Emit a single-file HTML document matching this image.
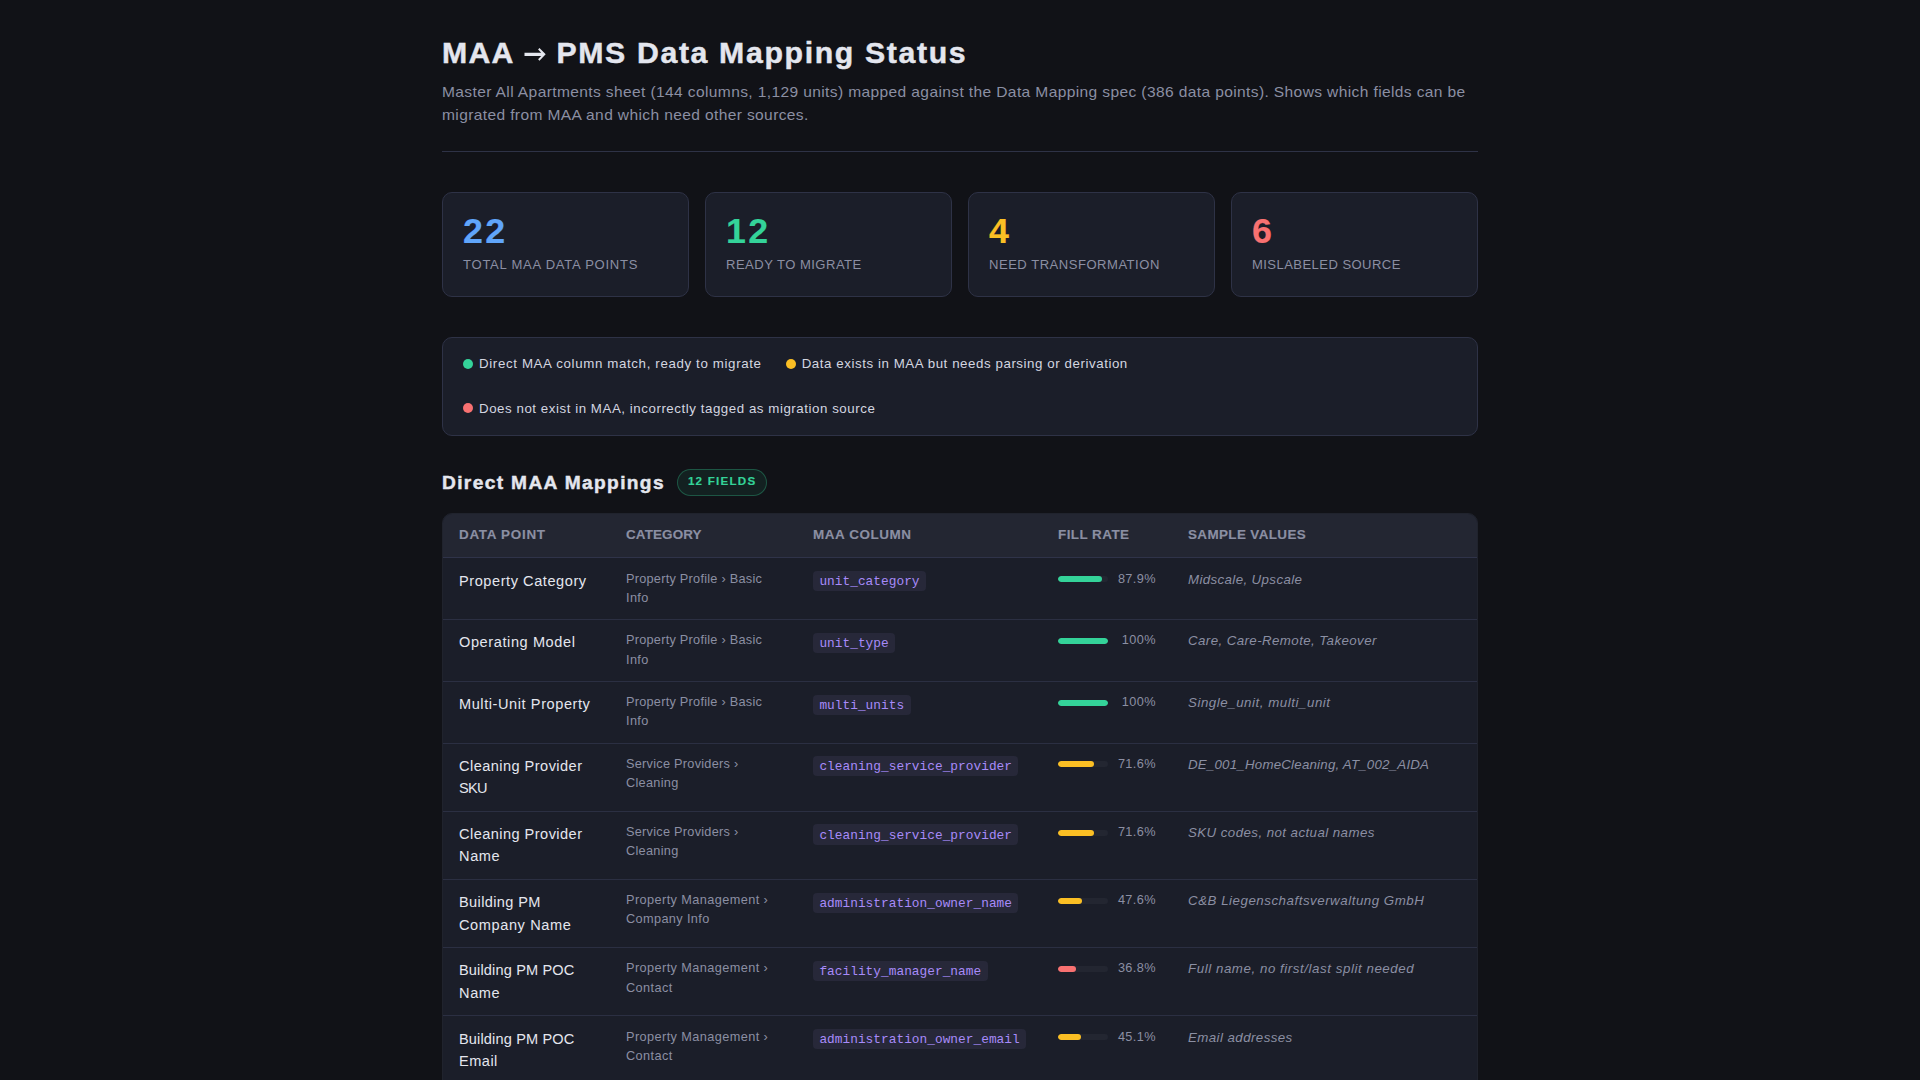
<!DOCTYPE html>
<html><head><meta charset="utf-8"><title>MAA → PMS Data Mapping Status</title>
<style>
*{box-sizing:border-box;margin:0;padding:0}
html,body{background:#111217}
.page{height:1080px;overflow:hidden}
body{font-family:"Liberation Sans",sans-serif;color:#e4e6ee;font-size:14px;line-height:22.4px}
.t{white-space:nowrap}
.blk{display:block}
.wrap{width:1100px;margin:0 auto;padding:36px 32px 0}
h1{font-size:30.240px;font-weight:700;line-height:36.4px;color:#e4e6ee;margin-bottom:9px;white-space:nowrap}
.sub{font-size:15.552px;color:#8b8fa3;line-height:23.03px;padding-bottom:24px;border-bottom:1px solid #2e3246;margin-bottom:40px}
.cards{display:grid;grid-template-columns:repeat(4,1fr);gap:16px;margin-bottom:40px}
.card{background:#1b1e29;border:1px solid #2e3246;border-radius:10px;padding:20px;height:104.88px}
.num{font-size:35.840px;font-weight:700;line-height:38.4px}
.lbl{letter-spacing:0;font-size:13.056px;color:#8b8fa3;margin-top:3px;line-height:20.48px}
.legend{background:#1b1e29;border:1px solid #2e3246;border-radius:10px;padding:16px 20px;display:flex;flex-wrap:wrap;gap:24px;margin-bottom:32px;height:98.96px}
.li{display:flex;align-items:center;gap:6px;font-size:13.312px;color:#d4d6e0;line-height:20.48px;height:20.48px}
.dot{width:10px;height:10px;border-radius:50%;flex:none;position:relative;top:-1px}
.sec{display:flex;align-items:center;gap:12px;margin-bottom:15.5px;height:29.44px}
.sec h2{font-size:19.136px;font-weight:700;line-height:29.44px}
.badge{letter-spacing:0;font-size:11.648px;font-weight:700;color:#34d399;background:rgba(52,211,153,.08);border:1px solid rgba(52,211,153,.3);border-radius:14px;padding:3px 10px 4px;line-height:18px;height:27px;position:relative;top:-1px}
table{width:100%;border-collapse:separate;border-spacing:0;table-layout:fixed}
.tbl{border:1px solid #20232d;border-radius:10px;overflow:hidden;background:#1b1e29}
th{letter-spacing:0;background:#232632;text-align:left;font-size:13.440px;font-weight:700;color:#8b8fa3;padding:12px 16px;border-bottom:1px solid #2f3349;line-height:19.2px;height:44.2px}
td{padding:11.2px 16px;vertical-align:top;border-bottom:1px solid #2b2f42;line-height:22.39px}
td.dp{font-size:14.560px;color:#e4e6ee}
td.cat{font-size:12.720px;color:#8b8fa3;line-height:19.18px}
td.mc{font-size:14px}
code{font-family:"Liberation Mono",monospace;font-size:12.800px;color:#a78bfa;background:#272839;padding:3.6px 6.4px 1.6px;border-radius:4px}
.fill{display:flex;align-items:center;gap:8px;font-size:12.720px;color:#8b8fa3;line-height:19.2px}
.bar{width:50px;height:6px;border-radius:3px;background:#232631;overflow:hidden;flex:none}
.bar i{display:block;height:100%;border-radius:3px}
.pct{min-width:40px;text-align:right}
td.smp{font-size:13.312px;font-style:italic;color:#8b8fa3;line-height:20.48px}
.c-h1{position:relative;top:-1.50px}
.c-sub{position:relative;top:-1.50px}
.c-num{position:relative;top:-1.50px}
.c-h2{position:relative;top:-0.50px}
.c-badge{position:relative;top:-1.00px}
.c-th{position:relative;top:-1.50px}
.c-cat{position:relative;top:-1.00px}
.c-pct{position:relative;top:-1.00px}
.c-code{position:relative;top:-0.50px}
.c-h1{-webkit-text-stroke:0.45px currentColor}
.c-num{-webkit-text-stroke:0.15px currentColor}
.c-h2{-webkit-text-stroke:0.45px currentColor}
.c-badge{-webkit-text-stroke:0.15px currentColor}
.c-th{-webkit-text-stroke:0.15px currentColor}
</style></head><body><div class="page"><div class="wrap">
<h1><span class="t c-h1" id="t1" style="letter-spacing:1.203px">MAA </span><span style="display:inline-block;width:23.47px;height:36.4px;vertical-align:top"><svg width="23.47" height="36.4" viewBox="0 0 23.47 36.4" style="display:block"><polygon fill="#e4e6ee" points="1.49,16.64 18.2,16.64 15.1,13.55 16.45,12.05 22.7,18.37 16.45,24.7 15.1,23.2 18.2,20.11 1.49,20.11"/></svg></span><span class="t c-h1" id="t2" style="letter-spacing:1.645px"> PMS Data Mapping Status</span></h1>
<p class="sub"><span class="t blk c-sub" id="t3" style="letter-spacing:0.378px">Master All Apartments sheet (144 columns, 1,129 units) mapped against the Data Mapping spec (386 data points). Shows which fields can be</span><span class="t blk c-sub" id="t4" style="letter-spacing:0.374px">migrated from MAA and which need other sources.</span></p>
<div class="cards">
<div class="card"><div class="num" style="color:#60a5fa"><span class="t c-num" id="t5" style="letter-spacing:2.336px">22</span></div><div class="lbl"><span class="t c-lbl" id="t6" style="letter-spacing:0.747px">TOTAL MAA DATA POINTS</span></div></div>
<div class="card"><div class="num" style="color:#34d399"><span class="t c-num" id="t7" style="letter-spacing:2.336px">12</span></div><div class="lbl"><span class="t c-lbl" id="t8" style="letter-spacing:0.478px">READY TO MIGRATE</span></div></div>
<div class="card"><div class="num" style="color:#fbbf24"><span class="t c-num" id="t9" style="letter-spacing:2.328px">4</span></div><div class="lbl"><span class="t c-lbl" id="t10" style="letter-spacing:0.508px">NEED TRANSFORMATION</span></div></div>
<div class="card"><div class="num" style="color:#f87171"><span class="t c-num" id="t11" style="letter-spacing:2.328px">6</span></div><div class="lbl"><span class="t c-lbl" id="t12" style="letter-spacing:0.438px">MISLABELED SOURCE</span></div></div>
</div><div class="legend">
<div class="li"><span class="dot" style="background:#34d399"></span><span class="t c-li" id="t13" style="letter-spacing:0.639px">Direct MAA column match, ready to migrate</span></div>
<div class="li"><span class="dot" style="background:#fbbf24"></span><span class="t c-li" id="t14" style="letter-spacing:0.567px">Data exists in MAA but needs parsing or derivation</span></div>
<div class="li"><span class="dot" style="background:#f87171"></span><span class="t c-li" id="t15" style="letter-spacing:0.549px">Does not exist in MAA, incorrectly tagged as migration source</span></div>
</div>
<div class="sec"><h2><span class="t c-h2" id="t16" style="letter-spacing:1.368px">Direct MAA Mappings</span></h2><span class="badge"><span class="t c-badge" id="t17" style="letter-spacing:1.215px">12 FIELDS</span></span></div>
<div class="tbl"><table><colgroup><col style="width:167px"><col style="width:187px"><col style="width:245px"><col style="width:130px"><col></colgroup>
<tr><th><span class="t c-th" id="t18" style="letter-spacing:0.711px">DATA POINT</span></th><th><span class="t c-th" id="t19" style="letter-spacing:0.127px">CATEGORY</span></th><th><span class="t c-th" id="t20" style="letter-spacing:0.584px">MAA COLUMN</span></th><th><span class="t c-th" id="t21" style="letter-spacing:0.453px">FILL RATE</span></th><th><span class="t c-th" id="t22" style="letter-spacing:0.371px">SAMPLE VALUES</span></th></tr>
<tr><td class="dp"><span class="t blk c-dp" id="t23" style="letter-spacing:0.564px">Property Category</span></td><td class="cat"><span class="t blk c-cat" id="t24" style="letter-spacing:0.252px">Property Profile › Basic</span><span class="t blk c-cat" id="t25" style="letter-spacing:0.375px">Info</span></td><td class="mc"><code><span class="t c-code" id="t26" style="letter-spacing:0.025px">unit_category</span></code></td><td><div class="fill"><div class="bar"><i style="width:87.9%;background:#34d399"></i></div><span class="pct"><span class="t c-pct" id="t27" style="letter-spacing:0.409px">87.9%</span></span></div></td><td class="smp"><span class="t c-smp" id="t28" style="letter-spacing:0.376px">Midscale, Upscale</span></td></tr>
<tr><td class="dp"><span class="t blk c-dp" id="t29" style="letter-spacing:0.596px">Operating Model</span></td><td class="cat"><span class="t blk c-cat" id="t30" style="letter-spacing:0.252px">Property Profile › Basic</span><span class="t blk c-cat" id="t31" style="letter-spacing:0.375px">Info</span></td><td class="mc"><code><span class="t c-code" id="t32" style="letter-spacing:0.024px">unit_type</span></code></td><td><div class="fill"><div class="bar"><i style="width:100%;background:#34d399"></i></div><span class="pct"><span class="t c-pct" id="t33" style="letter-spacing:0.445px">100%</span></span></div></td><td class="smp"><span class="t c-smp" id="t34" style="letter-spacing:0.414px">Care, Care-Remote, Takeover</span></td></tr>
<tr><td class="dp"><span class="t blk c-dp" id="t35" style="letter-spacing:0.580px">Multi-Unit Property</span></td><td class="cat"><span class="t blk c-cat" id="t36" style="letter-spacing:0.252px">Property Profile › Basic</span><span class="t blk c-cat" id="t37" style="letter-spacing:0.375px">Info</span></td><td class="mc"><code><span class="t c-code" id="t38" style="letter-spacing:0.024px">multi_units</span></code></td><td><div class="fill"><div class="bar"><i style="width:100%;background:#34d399"></i></div><span class="pct"><span class="t c-pct" id="t39" style="letter-spacing:0.445px">100%</span></span></div></td><td class="smp"><span class="t c-smp" id="t40" style="letter-spacing:0.543px">Single_unit, multi_unit</span></td></tr>
<tr><td class="dp"><span class="t blk c-dp" id="t41" style="letter-spacing:0.461px">Cleaning Provider</span><span class="t blk c-dp" id="t42" style="letter-spacing:-0.656px">SKU</span></td><td class="cat"><span class="t blk c-cat" id="t43" style="letter-spacing:0.263px">Service Providers ›</span><span class="t blk c-cat" id="t44" style="letter-spacing:0.301px">Cleaning</span></td><td class="mc"><code><span class="t c-code" id="t45" style="letter-spacing:0.025px">cleaning_service_provider</span></code></td><td><div class="fill"><div class="bar"><i style="width:71.6%;background:#fbbf24"></i></div><span class="pct"><span class="t c-pct" id="t46" style="letter-spacing:0.409px">71.6%</span></span></div></td><td class="smp"><span class="t c-smp" id="t47" style="letter-spacing:0.215px">DE_001_HomeCleaning, AT_002_AIDA</span></td></tr>
<tr><td class="dp"><span class="t blk c-dp" id="t48" style="letter-spacing:0.461px">Cleaning Provider</span><span class="t blk c-dp" id="t49" style="letter-spacing:0.625px">Name</span></td><td class="cat"><span class="t blk c-cat" id="t50" style="letter-spacing:0.263px">Service Providers ›</span><span class="t blk c-cat" id="t51" style="letter-spacing:0.301px">Cleaning</span></td><td class="mc"><code><span class="t c-code" id="t52" style="letter-spacing:0.025px">cleaning_service_provider</span></code></td><td><div class="fill"><div class="bar"><i style="width:71.6%;background:#fbbf24"></i></div><span class="pct"><span class="t c-pct" id="t53" style="letter-spacing:0.409px">71.6%</span></span></div></td><td class="smp"><span class="t c-smp" id="t54" style="letter-spacing:0.432px">SKU codes, not actual names</span></td></tr>
<tr><td class="dp"><span class="t blk c-dp" id="t55" style="letter-spacing:0.376px">Building PM</span><span class="t blk c-dp" id="t56" style="letter-spacing:0.604px">Company Name</span></td><td class="cat"><span class="t blk c-cat" id="t57" style="letter-spacing:0.412px">Property Management ›</span><span class="t blk c-cat" id="t58" style="letter-spacing:0.370px">Company Info</span></td><td class="mc"><code><span class="t c-code" id="t59" style="letter-spacing:0.025px">administration_owner_name</span></code></td><td><div class="fill"><div class="bar"><i style="width:47.6%;background:#fbbf24"></i></div><span class="pct"><span class="t c-pct" id="t60" style="letter-spacing:0.409px">47.6%</span></span></div></td><td class="smp"><span class="t c-smp" id="t61" style="letter-spacing:0.528px">C&amp;B Liegenschaftsverwaltung GmbH</span></td></tr>
<tr><td class="dp"><span class="t blk c-dp" id="t62" style="letter-spacing:0.151px">Building PM POC</span><span class="t blk c-dp" id="t63" style="letter-spacing:0.625px">Name</span></td><td class="cat"><span class="t blk c-cat" id="t64" style="letter-spacing:0.412px">Property Management ›</span><span class="t blk c-cat" id="t65" style="letter-spacing:0.406px">Contact</span></td><td class="mc"><code><span class="t c-code" id="t66" style="letter-spacing:0.025px">facility_manager_name</span></code></td><td><div class="fill"><div class="bar"><i style="width:36.8%;background:#f87171"></i></div><span class="pct"><span class="t c-pct" id="t67" style="letter-spacing:0.409px">36.8%</span></span></div></td><td class="smp"><span class="t c-smp" id="t68" style="letter-spacing:0.560px">Full name, no first/last split needed</span></td></tr>
<tr><td class="dp"><span class="t blk c-dp" id="t69" style="letter-spacing:0.151px">Building PM POC</span><span class="t blk c-dp" id="t70" style="letter-spacing:0.494px">Email</span></td><td class="cat"><span class="t blk c-cat" id="t71" style="letter-spacing:0.412px">Property Management ›</span><span class="t blk c-cat" id="t72" style="letter-spacing:0.406px">Contact</span></td><td class="mc"><code><span class="t c-code" id="t73" style="letter-spacing:0.025px">administration_owner_email</span></code></td><td><div class="fill"><div class="bar"><i style="width:45.1%;background:#fbbf24"></i></div><span class="pct"><span class="t c-pct" id="t74" style="letter-spacing:0.409px">45.1%</span></span></div></td><td class="smp"><span class="t c-smp" id="t75" style="letter-spacing:0.425px">Email addresses</span></td></tr>
<tr><td class="dp"><span class="t blk c-dp" id="t76" style="letter-spacing:0.151px">Building PM POC</span><span class="t blk c-dp" id="t77" style="letter-spacing:0.259px">Phone</span></td><td class="cat"><span class="t blk c-cat" id="t78" style="letter-spacing:0.412px">Property Management ›</span><span class="t blk c-cat" id="t79" style="letter-spacing:0.406px">Contact</span></td><td class="mc"><code><span class="t c-code" id="t80" style="letter-spacing:0.025px">administration_owner_phone</span></code></td><td><div class="fill"><div class="bar"><i style="width:44.9%;background:#fbbf24"></i></div><span class="pct"><span class="t c-pct" id="t81" style="letter-spacing:0.409px">44.9%</span></span></div></td><td class="smp"><span class="t c-smp" id="t82" style="letter-spacing:0.495px">Phone numbers</span></td></tr>
</table></div></div></div></body></html>
